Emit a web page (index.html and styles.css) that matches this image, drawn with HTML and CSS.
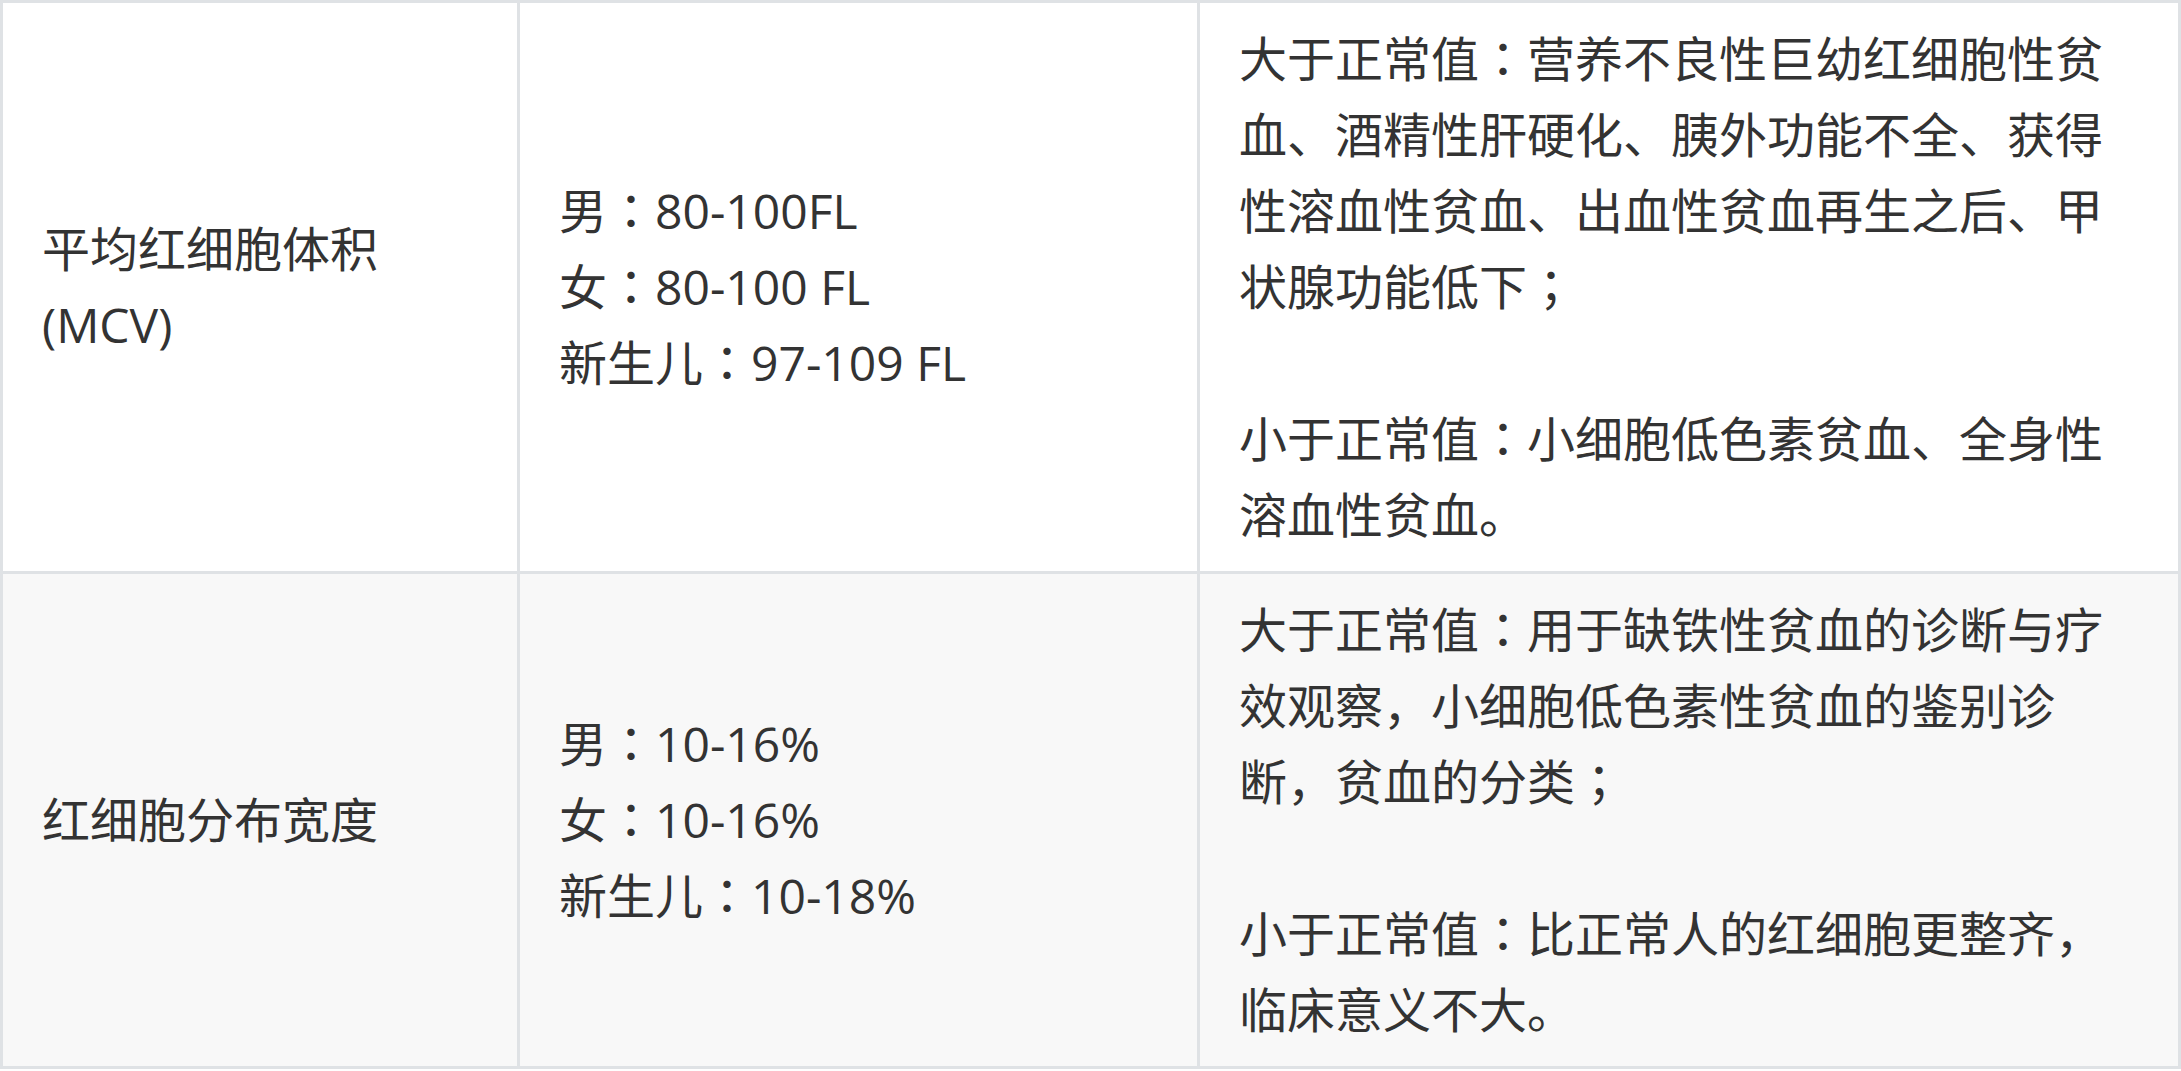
FILE: index.html
```html
<!DOCTYPE HTML>
<html>
<head>
    <meta charset="utf-8">
    <title>血常规</title>
    <link rel="stylesheet" href="styles.css">
</head>
<body>
    <table class="lab">
        <colgroup>
            <col class="c-name">
            <col class="c-range">
            <col class="c-note">
        </colgroup>
        <tbody>
            <tr>
                <td>平均红细胞体积(MCV)</td>
                <td>男<span class="pt">：</span>80-100FL<br>女<span class="pt">：</span>80-100 FL<br>新生儿<span class="pt">：</span>97-109 FL</td>
                <td>大于正常值<span class="pt">：</span>营养不良性巨幼红细胞性贫血、酒精性肝硬化、胰外功能不全、获得性溶血性贫血、出血性贫血再生之后、甲状腺功能低下<span class="pt">；</span><br><br>小于正常值<span class="pt">：</span>小细胞低色素贫血、全身性溶血性贫血。</td>
            </tr>
            <tr>
                <td>红细胞分布宽度</td>
                <td>男<span class="pt">：</span>10-16%<br>女<span class="pt">：</span>10-16%<br>新生儿<span class="pt">：</span>10-18%</td>
                <td>大于正常值<span class="pt">：</span>用于缺铁性贫血的诊断与疗效观察<span class="pt">，</span>小细胞低色素性贫血的鉴别诊断<span class="pt">，</span>贫血的分类<span class="pt">；</span><br><br>小于正常值<span class="pt">：</span>比正常人的红细胞更整齐<span class="pt">，</span>临床意义不大。</td>
            </tr>
        </tbody>
    </table>
</body>
</html>
```

FILE: styles.css
```css
body{
    margin:0;
    background:#ffffff;
    color:#333333;
    font-family:"Open Sans","Noto Sans CJK SC",sans-serif;
    font-size:48px;
    line-height:76px;
}
/* 全角标点居中（冒号、分号），行高略小以免撑高行 */
.pt{
    font-family:"Noto Sans CJK JP",sans-serif;
    line-height:70px;
}
.lab{
    width:2181px;
    border-collapse:collapse;
    table-layout:fixed;
}
.c-name{
    width:517px;
}
.c-range{
    width:680px;
}
.lab td{
    border:3px solid #dfe2e5;
    padding:18px 39px;
    vertical-align:middle;
    text-align:left;
}
.lab tr:nth-child(2n){
    background-color:#f8f8f8;
}
```
